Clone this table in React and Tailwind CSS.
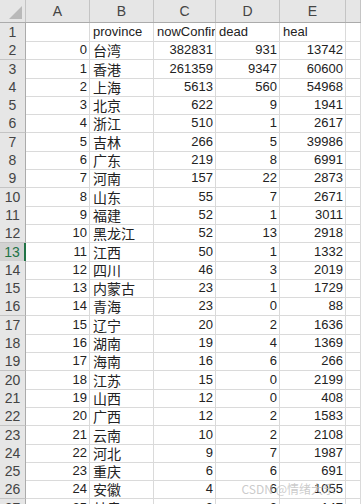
import React from 'react';

const rows = [
  [0, '台湾', 382831, 931, 13742],
  [1, '香港', 261359, 9347, 60600],
  [2, '上海', 5613, 560, 54968],
  [3, '北京', 622, 9, 1941],
  [4, '浙江', 510, 1, 2617],
  [5, '吉林', 266, 5, 39986],
  [6, '广东', 219, 8, 6991],
  [7, '河南', 157, 22, 2873],
  [8, '山东', 55, 7, 2671],
  [9, '福建', 52, 1, 3011],
  [10, '黑龙江', 52, 13, 2918],
  [11, '江西', 50, 1, 1332],
  [12, '四川', 46, 3, 2019],
  [13, '内蒙古', 23, 1, 1729],
  [14, '青海', 23, 0, 88],
  [15, '辽宁', 20, 2, 1636],
  [16, '湖南', 19, 4, 1369],
  [17, '海南', 16, 6, 266],
  [18, '江苏', 15, 0, 2199],
  [19, '山西', 12, 0, 408],
  [20, '广西', 12, 2, 1583],
  [21, '云南', 10, 2, 2108],
  [22, '河北', 9, 7, 1987],
  [23, '重庆', 6, 6, 691],
  [24, '安徽', 4, 6, 1055],
  [25, '甘肃', 3, 2, 147],
];

const grid = 'grid grid-cols-[26px_64px_64px_62px_64px_66px_1fr]';
const cell = 'border-r border-b border-[#dadada] overflow-hidden whitespace-nowrap';
const num = `${cell} text-right pr-[2px]`;

const App = () => {
  return (
    <div className="relative w-[361px] h-[504px] overflow-hidden bg-white text-[13px] text-[#222] font-['Liberation_Sans','Noto_Sans_CJK_SC',sans-serif]">
      {/* column headers */}
      <div className={`${grid} h-[23px] bg-[#e6e6e6] text-[#444] text-[14px] leading-[22px] border-b border-[#ababab]`}>
        <div className="relative border-r border-[#c4c4c4]">
          <div className="absolute right-[3px] bottom-[3px] w-0 h-0 border-l-[13px] border-l-transparent border-b-[13px] border-b-[#b9b9b9]" />
        </div>
        {['A', 'B', 'C', 'D', 'E', ''].map((c, i) => (
          <div key={i} className="text-center border-r border-[#c4c4c4]">{c}</div>
        ))}
      </div>

      {/* row 1: column names */}
      <div className={`${grid} h-[18.3px] leading-[18px]`}>
        <div className="bg-[#e6e6e6] text-[#444] text-[14px] text-center border-r border-[#ababab] border-b border-b-[#c4c4c4]">1</div>
        <div className={cell}></div>
        <div className={`${cell} pl-[3px]`}>province</div>
        <div className={`${cell} pl-[3px]`}>nowConfirm</div>
        <div className={`${cell} pl-[3px]`}>dead</div>
        <div className={`${cell} pl-[3px]`}>heal</div>
        <div className={cell}></div>
      </div>

      {rows.map(([idx, prov, conf, dead, heal], i) => {
        const rowNo = i + 2;
        const selected = rowNo === 13;
        return (
          <div key={rowNo} className={`${grid} h-[18.3px] leading-[18px]`}>
            <div
              className={
                selected
                  ? 'bg-[#d2d2d2] text-[#217346] text-[14px] text-center border-r-2 border-[#217346] border-b border-b-[#c4c4c4]'
                  : 'bg-[#e6e6e6] text-[#444] text-[14px] text-center border-r border-[#ababab] border-b border-b-[#c4c4c4]'
              }
            >
              {rowNo}
            </div>
            <div className={num}>{idx}</div>
            <div className={`${cell} pl-[3px] text-[14px] font-['Noto_Sans_CJK_SC',sans-serif]`}>{prov}</div>
            <div className={num}>{conf}</div>
            <div className={num}>{dead}</div>
            <div className={num}>{heal}</div>
            <div className={cell}></div>
          </div>
        );
      })}

      {/* watermark */}
      <div className="absolute right-[26px] bottom-[6px] text-[12px] text-[#bdbdbd]/80 font-['Noto_Sans_CJK_SC',sans-serif] pointer-events-none">
        CSDN @情绪大乐
      </div>
    </div>
  );
};

export default App;
